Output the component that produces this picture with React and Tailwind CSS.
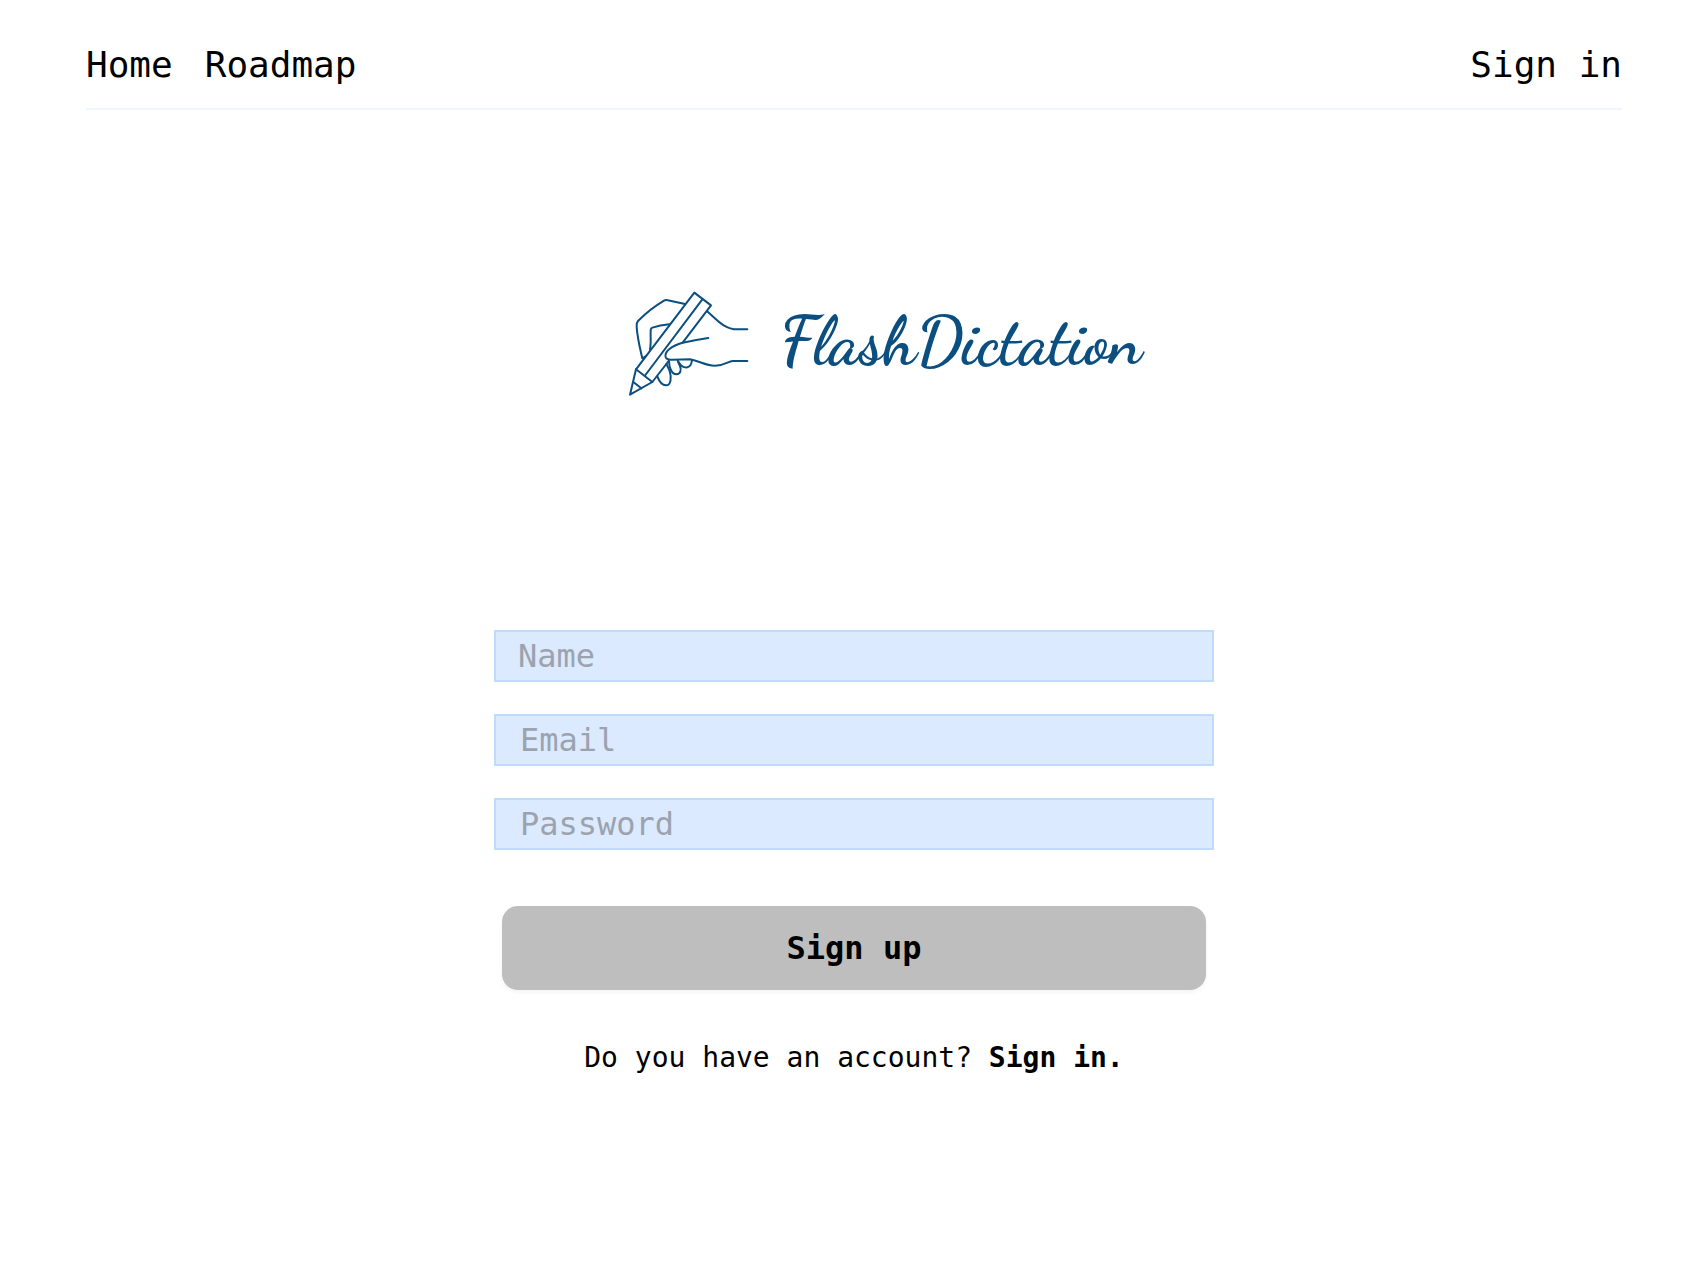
const fields = [
  { id: 'name', label: 'Name', type: 'text', padding: 'px-[22px]' },
  { id: 'email', label: 'Email', type: 'email', padding: 'px-6' },
  { id: 'password', label: 'Password', type: 'password', padding: 'px-6' },
];

function WritingHand() {
  return (
    <svg
      viewBox="0 0 480 390"
      className="h-[130px] w-[160px] shrink-0"
      fill="none"
      stroke="currentColor"
      strokeWidth="6"
      strokeLinecap="round"
      strokeLinejoin="round"
      aria-hidden="true"
    >
      <path d="M218 188 303 76 253 38 78 268 60 344 127 306 176 243" />
      <path d="M78 268 127 306M277 58 104 288M70 306 94 325" />
      <path d="M225 72 170 60Q166 59 162 62Q120 87 84 123Q79 128 80 140C82 175 90 205 97 235L107 229" />
      <path d="M178 133Q150 136 127 143Q122 145 122 151C121 170 124 190 120 208" />
      <path d="M293 95C320 118 342 148 382 148H412" />
      <path d="M295 174Q255 180 218 188C185 197 162 215 167 232Q171 240 185 239L240 238C270 243 285 257 315 257C345 257 355 243 368 243H412" />
      <path d="M142 289C148 305 157 316 168 316C184 316 184 291 180 277C178 266 171 260 170 252" />
      <path d="M177 243C177 262 185 283 199 283C213 283 214 267 210 258C207 252 203 248 203 240" />
      <path d="M207 247C212 258 222 263 232 262C241 260 245 250 246 240" />
    </svg>
  );
}

export default function App() {
  return (
    <div className="min-h-screen bg-white pl-[26px] font-['DejaVu_Sans_Mono',monospace] text-black">
      <div className="mx-auto max-w-[1656px] px-[60px]">
        <header className="flex items-center justify-between border-b-2 border-[#eff4ff] pt-[45px] pb-[23px] text-4xl">
          <nav className="flex gap-8">
            <a href="#home">Home</a>
            <a href="#roadmap">Roadmap</a>
          </nav>
          <a href="#sign-in">Sign in</a>
        </header>

        <main className="flex flex-col items-center">
          <h1 className="mt-[170px] flex items-center justify-center gap-2.5 pl-11 text-[#0b4f80]">
            <WritingHand />
            <span className="pb-2 font-['Dancing_Script',cursive] text-[67px] leading-none font-bold">
              FlashDictation
            </span>
          </h1>

          <form
            className="mt-[220px] flex w-full max-w-[720px] flex-col gap-8"
            onSubmit={(event) => event.preventDefault()}
          >
            {fields.map((field) => (
              <input
                key={field.id}
                id={field.id}
                name={field.id}
                type={field.type}
                placeholder={field.label}
                aria-label={field.label}
                className={`h-[52px] w-full border-2 border-[#bfdbfe] bg-[#dbeafe] text-[32px] leading-10 outline-none placeholder:text-[#9ca3af] ${field.padding}`}
              />
            ))}
            <button
              type="submit"
              className="mx-2 mt-6 h-[84px] rounded-2xl bg-[#bebebe] text-[32px] font-bold shadow-[0_2px_4px_rgba(0,0,0,0.05)]"
            >
              Sign up
            </button>
          </form>

          <p className="mt-12 text-[28px] leading-10">
            Do you have an account?{' '}
            <a href="#sign-in" className="font-bold">
              Sign in.
            </a>
          </p>
        </main>
      </div>
    </div>
  );
}
